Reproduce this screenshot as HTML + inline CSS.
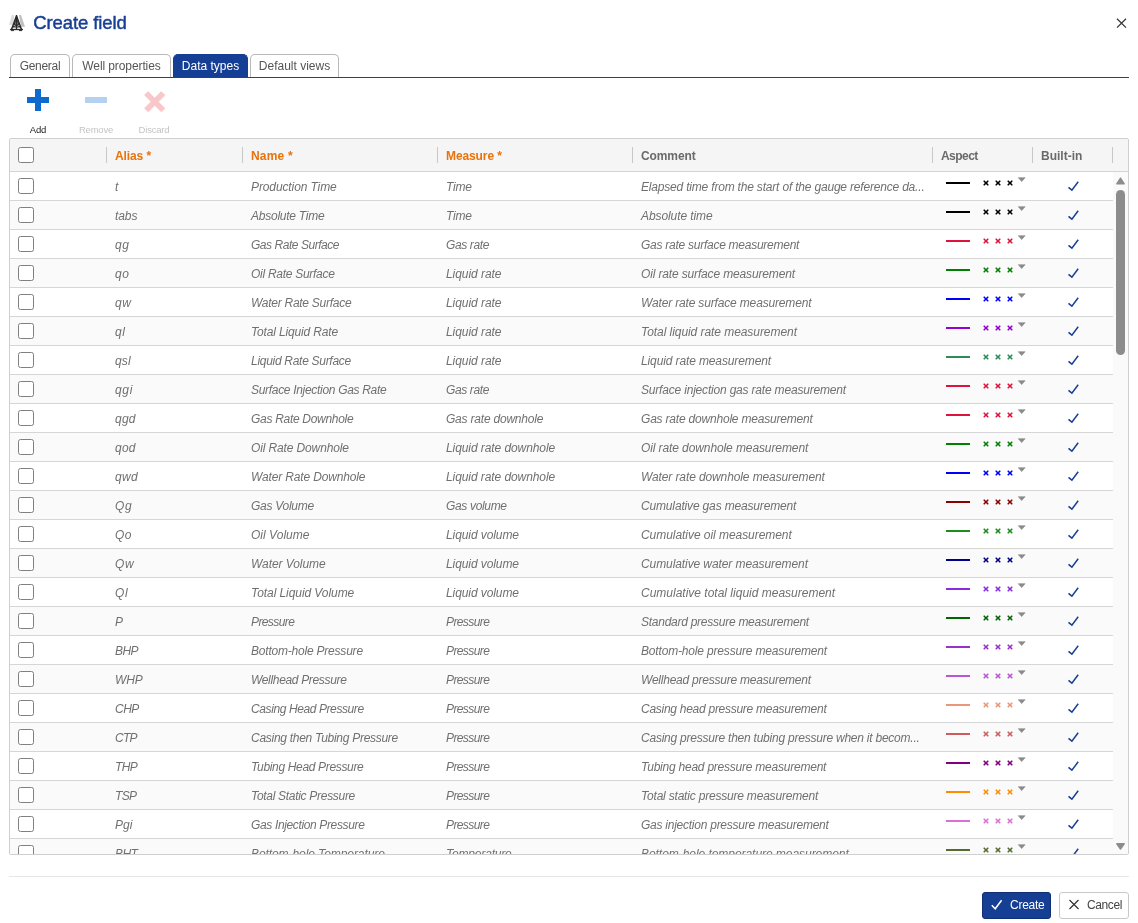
<!DOCTYPE html>
<html lang="en">
<head>
<meta charset="utf-8">
<title>Create field</title>
<style>
*{box-sizing:border-box;margin:0;padding:0}
html,body{width:1138px;height:923px;overflow:hidden;background:#fff}
body{font-family:"Liberation Sans",sans-serif;color:#555;position:relative}
#wrap{position:absolute;left:0;top:0;width:1138px;height:923px;will-change:transform}
.abs{position:absolute}
#ticon{position:absolute;left:4px;top:8px}
#title{position:absolute;left:33.200px;top:10.600px;font-size:18.5px;line-height:24px;color:#173f94;white-space:nowrap;letter-spacing:-0.1px;-webkit-text-stroke:0.45px #173f94}
#close{position:absolute;left:1115px;top:17px}
#tabs{position:absolute;left:9px;top:54px;width:1120px;height:24px;border-bottom:1px solid #1b4298}
.tab{position:absolute;top:0;height:23px;border:1px solid #b9b9b9;border-bottom:none;border-radius:5px 5px 0 0;font-size:12px;line-height:22px;text-align:center;color:#555;background:#fff;white-space:nowrap}
.tab.on{background:#153f94;border-color:#153f94;color:#fff}
.tb{position:absolute;top:124.500px;font-size:9.500px;line-height:10px;letter-spacing:-.2px;width:60px;text-align:center;color:#222}
.tb.dis{color:#c4c4c4}
#grid{position:absolute;left:9px;top:138px;width:1120px;height:717px;border:1px solid #cfcfcf;border-radius:2px;overflow:hidden;background:#fff}
#hdr{position:absolute;left:0;top:0;width:1118px;height:33px;background:#f5f5f5;border-bottom:1px solid #d4d4d4}
.h{position:absolute;top:1px;font-size:12px;line-height:32px;letter-spacing:-0.1px;font-weight:bold;color:#6a6a6a;white-space:nowrap}
.h.req{color:#e8720c}
.sep{position:absolute;top:8px;width:1px;height:16px;background:#c8c8c8}
#body{position:absolute;left:0;top:33px;width:1103px;height:690px}
.r{position:relative;height:29px;border-bottom:1px solid #d6d6d6;background:#fff;width:1103px}
.r.alt{background:#fafafa}
.cb{position:absolute;left:8px;top:6px;width:16px;height:16px;border:1px solid #808080;border-radius:2.5px;background:#fff}
.c{position:absolute;top:0;font-size:12px;line-height:30px;font-style:italic;color:#707070;white-space:nowrap}
.c1{left:105px}.c2{left:241px}.c3{left:436px}.c4{left:631px}
.asp{position:absolute;left:930px;top:0;fill:none}
.asp .ln{stroke-width:2}
.asp .xx{stroke-width:1.6;stroke-linecap:round}
.asp .dd{fill:#8a8a8a;stroke:#8a8a8a;stroke-width:.6;stroke-linejoin:round}
.chk{position:absolute;left:1057px;top:8px;fill:none;stroke:#173f94;stroke-width:1.5}
#sb{position:absolute;left:1103px;top:33px;width:15px;height:683px;background:#fafafa}
#foot{position:absolute;left:9px;top:876px;width:1120px;height:1px;background:#e6e6e6}
.btn{position:absolute;top:892px;height:27px;border-radius:3px;font-size:12px;line-height:24px;white-space:nowrap}
#bcreate{left:982px;width:69px;background:#153f94;border:1px solid #0f2f73;color:#fff}
#bcancel{left:1059px;width:70px;background:#fff;border:1px solid #c9c9c9;color:#444}
</style>
</head>
<body>
<div id="wrap">
<svg id="ticon" width="30" height="30" viewBox="0 0 30 30"><path d="M7.800 7H9.800L11.200 16.800H5z" fill="#dedede"/><path d="M15 7H17L21 18.800H17z" fill="#c0c0c0"/><g fill="none" stroke="#2b2b2b"><path d="M12.500 8L7.600 21.300M12.500 8L17.400 21.300" stroke-width="1.500"/><path d="M12.500 7V21.300" stroke-width="1.300"/><path d="M12.500 6.800L10.800 12.600H14.200z" fill="#2b2b2b" stroke="none"/><path d="M10.200 13.300H14.800M9.200 16.200H15.800M8.200 19H16.800M10.200 13.300L15.800 16.200M14.800 13.300L9.200 16.200M9.200 16.200L16.800 19M15.800 16.200L8.200 19" stroke-width="1"/><path d="M6 21.500H19" stroke-width="1.300"/><path d="M7 22.600H10M15 22.600H18" stroke-width="1"/></g></svg>
<div id="title">Create field</div>
<svg id="close" width="12" height="12" viewBox="0 0 12 12"><path d="M2 1.800L11 10.600M11 1.800L2 10.600" stroke="#333" stroke-width="1.200" fill="none"/></svg>
<div id="tabs">
<div class="tab" style="left:1px;width:60px;letter-spacing:-0.3px">General</div>
<div class="tab" style="left:63px;width:99px;letter-spacing:-0.1px">Well properties</div>
<div class="tab on" style="left:164px;width:75px">Data types</div>
<div class="tab" style="left:241px;width:89px">Default views</div>
</div>
<svg class="abs" style="left:27px;top:89px" width="22" height="22" viewBox="0 0 22 22"><path d="M8 0h6v8h8v6h-8v8h-6v-8h-8v-6h8z" fill="#0f6acf"/></svg>
<svg class="abs" style="left:85px;top:89px" width="22" height="22" viewBox="0 0 22 22"><path d="M0 8h22v6h-22z" fill="#b4d2ef"/></svg>
<svg class="abs" style="left:143px;top:89px" width="26" height="26" viewBox="0 0 26 26"><path d="M3.800 4.800l17 17m0-17l-17 17" stroke="#fdeced" stroke-width="5.500" fill="none"/><path d="M3.100 4.100l17 17m0-17l-17 17" stroke="#f8c7c9" stroke-width="5.500" fill="none"/></svg>
<div class="tb" style="left:8px">Add</div>
<div class="tb dis" style="left:66px">Remove</div>
<div class="tb dis" style="left:124px">Discard</div>
<div id="grid">
<div id="hdr">
<span class="cb" style="top:8px"></span>
<i class="sep" style="left:96px"></i><span class="h req" style="left:105px">Alias *</span>
<i class="sep" style="left:232px"></i><span class="h req" style="left:241px;letter-spacing:.2px">Name *</span>
<i class="sep" style="left:427px"></i><span class="h req" style="left:436px">Measure *</span>
<i class="sep" style="left:622px"></i><span class="h" style="left:631px">Comment</span>
<i class="sep" style="left:922px"></i><span class="h" style="left:931px;letter-spacing:-.55px">Aspect</span>
<i class="sep" style="left:1022px"></i><span class="h" style="left:1031px;letter-spacing:0">Built-in</span>
<i class="sep" style="left:1102px"></i>
</div>
<div id="body">
<div class="r"><span class="cb"></span><span class="c c1">t</span><span class="c c2" style="letter-spacing:-0.11px">Production Time</span><span class="c c3" style="letter-spacing:-0.25px">Time</span><span class="c c4" style="letter-spacing:-0.19px">Elapsed time from the start of the gauge reference da...</span><svg class="asp" width="90" height="29" viewBox="0 0 90 29" stroke="#000000"><path class="ln" d="M6 11H30"/><path class="xx" d="M44.200 9.200l3.600 3.600m0-3.600l-3.600 3.600M56.200 9.200l3.600 3.600m0-3.600l-3.600 3.600M68.200 9.200l3.600 3.600m0-3.600l-3.600 3.600"/><path class="dd" d="M78.300 5.700h6.800l-3.400 3.900z"/></svg><svg class="chk" width="14" height="12" viewBox="0 0 14 12"><path d="M1.500 7.400L4.900 10.200L11.200 1.800"/></svg></div>
<div class="r alt"><span class="cb"></span><span class="c c1" style="letter-spacing:-0.1px">tabs</span><span class="c c2" style="letter-spacing:-0.24px">Absolute Time</span><span class="c c3" style="letter-spacing:-0.25px">Time</span><span class="c c4" style="letter-spacing:-0.09px">Absolute time</span><svg class="asp" width="90" height="29" viewBox="0 0 90 29" stroke="#000000"><path class="ln" d="M6 11H30"/><path class="xx" d="M44.200 9.200l3.600 3.600m0-3.600l-3.600 3.600M56.200 9.200l3.600 3.600m0-3.600l-3.600 3.600M68.200 9.200l3.600 3.600m0-3.600l-3.600 3.600"/><path class="dd" d="M78.300 5.700h6.800l-3.400 3.900z"/></svg><svg class="chk" width="14" height="12" viewBox="0 0 14 12"><path d="M1.500 7.400L4.900 10.200L11.200 1.800"/></svg></div>
<div class="r"><span class="cb"></span><span class="c c1" style="letter-spacing:0.7px">qg</span><span class="c c2" style="letter-spacing:-0.46px">Gas Rate Surface</span><span class="c c3" style="letter-spacing:-0.38px">Gas rate</span><span class="c c4" style="letter-spacing:-0.26px">Gas rate surface measurement</span><svg class="asp" width="90" height="29" viewBox="0 0 90 29" stroke="#dc143c"><path class="ln" d="M6 11H30"/><path class="xx" d="M44.200 9.200l3.600 3.600m0-3.600l-3.600 3.600M56.200 9.200l3.600 3.600m0-3.600l-3.600 3.600M68.200 9.200l3.600 3.600m0-3.600l-3.600 3.600"/><path class="dd" d="M78.300 5.700h6.800l-3.400 3.900z"/></svg><svg class="chk" width="14" height="12" viewBox="0 0 14 12"><path d="M1.500 7.400L4.900 10.200L11.200 1.800"/></svg></div>
<div class="r alt"><span class="cb"></span><span class="c c1" style="letter-spacing:0.7px">qo</span><span class="c c2" style="letter-spacing:-0.28px">Oil Rate Surface</span><span class="c c3" style="letter-spacing:-0.06px">Liquid rate</span><span class="c c4" style="letter-spacing:-0.15px">Oil rate surface measurement</span><svg class="asp" width="90" height="29" viewBox="0 0 90 29" stroke="#008000"><path class="ln" d="M6 11H30"/><path class="xx" d="M44.200 9.200l3.600 3.600m0-3.600l-3.600 3.600M56.200 9.200l3.600 3.600m0-3.600l-3.600 3.600M68.200 9.200l3.600 3.600m0-3.600l-3.600 3.600"/><path class="dd" d="M78.300 5.700h6.800l-3.400 3.900z"/></svg><svg class="chk" width="14" height="12" viewBox="0 0 14 12"><path d="M1.500 7.400L4.900 10.200L11.200 1.800"/></svg></div>
<div class="r"><span class="cb"></span><span class="c c1" style="letter-spacing:0.7px">qw</span><span class="c c2" style="letter-spacing:-0.27px">Water Rate Surface</span><span class="c c3" style="letter-spacing:-0.06px">Liquid rate</span><span class="c c4" style="letter-spacing:-0.16px">Water rate surface measurement</span><svg class="asp" width="90" height="29" viewBox="0 0 90 29" stroke="#0000ff"><path class="ln" d="M6 11H30"/><path class="xx" d="M44.200 9.200l3.600 3.600m0-3.600l-3.600 3.600M56.200 9.200l3.600 3.600m0-3.600l-3.600 3.600M68.200 9.200l3.600 3.600m0-3.600l-3.600 3.600"/><path class="dd" d="M78.300 5.700h6.800l-3.400 3.900z"/></svg><svg class="chk" width="14" height="12" viewBox="0 0 14 12"><path d="M1.500 7.400L4.900 10.200L11.200 1.800"/></svg></div>
<div class="r alt"><span class="cb"></span><span class="c c1" style="letter-spacing:0.7px">ql</span><span class="c c2" style="letter-spacing:-0.16px">Total Liquid Rate</span><span class="c c3" style="letter-spacing:-0.06px">Liquid rate</span><span class="c c4" style="letter-spacing:-0.06px">Total liquid rate measurement</span><svg class="asp" width="90" height="29" viewBox="0 0 90 29" stroke="#9400d3"><path class="ln" d="M6 11H30"/><path class="xx" d="M44.200 9.200l3.600 3.600m0-3.600l-3.600 3.600M56.200 9.200l3.600 3.600m0-3.600l-3.600 3.600M68.200 9.200l3.600 3.600m0-3.600l-3.600 3.600"/><path class="dd" d="M78.300 5.700h6.800l-3.400 3.900z"/></svg><svg class="chk" width="14" height="12" viewBox="0 0 14 12"><path d="M1.500 7.400L4.900 10.200L11.200 1.800"/></svg></div>
<div class="r"><span class="cb"></span><span class="c c1" style="letter-spacing:0.13px">qsl</span><span class="c c2" style="letter-spacing:-0.29px">Liquid Rate Surface</span><span class="c c3" style="letter-spacing:-0.06px">Liquid rate</span><span class="c c4" style="letter-spacing:-0.12px">Liquid rate measurement</span><svg class="asp" width="90" height="29" viewBox="0 0 90 29" stroke="#2e8b57"><path class="ln" d="M6 11H30"/><path class="xx" d="M44.200 9.200l3.600 3.600m0-3.600l-3.600 3.600M56.200 9.200l3.600 3.600m0-3.600l-3.600 3.600M68.200 9.200l3.600 3.600m0-3.600l-3.600 3.600"/><path class="dd" d="M78.300 5.700h6.800l-3.400 3.900z"/></svg><svg class="chk" width="14" height="12" viewBox="0 0 14 12"><path d="M1.500 7.400L4.900 10.200L11.200 1.800"/></svg></div>
<div class="r alt"><span class="cb"></span><span class="c c1" style="letter-spacing:0.7px">qgi</span><span class="c c2" style="letter-spacing:-0.31px">Surface Injection Gas Rate</span><span class="c c3" style="letter-spacing:-0.38px">Gas rate</span><span class="c c4" style="letter-spacing:-0.19px">Surface injection gas rate measurement</span><svg class="asp" width="90" height="29" viewBox="0 0 90 29" stroke="#dc143c"><path class="ln" d="M6 11H30"/><path class="xx" d="M44.200 9.200l3.600 3.600m0-3.600l-3.600 3.600M56.200 9.200l3.600 3.600m0-3.600l-3.600 3.600M68.200 9.200l3.600 3.600m0-3.600l-3.600 3.600"/><path class="dd" d="M78.300 5.700h6.800l-3.400 3.900z"/></svg><svg class="chk" width="14" height="12" viewBox="0 0 14 12"><path d="M1.500 7.400L4.900 10.200L11.200 1.800"/></svg></div>
<div class="r"><span class="cb"></span><span class="c c1" style="letter-spacing:0.23px">qgd</span><span class="c c2" style="letter-spacing:-0.3px">Gas Rate Downhole</span><span class="c c3" style="letter-spacing:-0.21px">Gas rate downhole</span><span class="c c4" style="letter-spacing:-0.2px">Gas rate downhole measurement</span><svg class="asp" width="90" height="29" viewBox="0 0 90 29" stroke="#dc143c"><path class="ln" d="M6 11H30"/><path class="xx" d="M44.200 9.200l3.600 3.600m0-3.600l-3.600 3.600M56.200 9.200l3.600 3.600m0-3.600l-3.600 3.600M68.200 9.200l3.600 3.600m0-3.600l-3.600 3.600"/><path class="dd" d="M78.300 5.700h6.800l-3.400 3.900z"/></svg><svg class="chk" width="14" height="12" viewBox="0 0 14 12"><path d="M1.500 7.400L4.900 10.200L11.200 1.800"/></svg></div>
<div class="r alt"><span class="cb"></span><span class="c c1" style="letter-spacing:0.23px">qod</span><span class="c c2" style="letter-spacing:-0.13px">Oil Rate Downhole</span><span class="c c3" style="letter-spacing:-0.08px">Liquid rate downhole</span><span class="c c4" style="letter-spacing:-0.1px">Oil rate downhole measurement</span><svg class="asp" width="90" height="29" viewBox="0 0 90 29" stroke="#008000"><path class="ln" d="M6 11H30"/><path class="xx" d="M44.200 9.200l3.600 3.600m0-3.600l-3.600 3.600M56.200 9.200l3.600 3.600m0-3.600l-3.600 3.600M68.200 9.200l3.600 3.600m0-3.600l-3.600 3.600"/><path class="dd" d="M78.300 5.700h6.800l-3.400 3.900z"/></svg><svg class="chk" width="14" height="12" viewBox="0 0 14 12"><path d="M1.500 7.400L4.900 10.200L11.200 1.800"/></svg></div>
<div class="r"><span class="cb"></span><span class="c c1" style="letter-spacing:0.39px">qwd</span><span class="c c2" style="letter-spacing:-0.15px">Water Rate Downhole</span><span class="c c3" style="letter-spacing:-0.08px">Liquid rate downhole</span><span class="c c4" style="letter-spacing:-0.11px">Water rate downhole measurement</span><svg class="asp" width="90" height="29" viewBox="0 0 90 29" stroke="#0000ff"><path class="ln" d="M6 11H30"/><path class="xx" d="M44.200 9.200l3.600 3.600m0-3.600l-3.600 3.600M56.200 9.200l3.600 3.600m0-3.600l-3.600 3.600M68.200 9.200l3.600 3.600m0-3.600l-3.600 3.600"/><path class="dd" d="M78.300 5.700h6.800l-3.400 3.900z"/></svg><svg class="chk" width="14" height="12" viewBox="0 0 14 12"><path d="M1.500 7.400L4.900 10.200L11.200 1.800"/></svg></div>
<div class="r alt"><span class="cb"></span><span class="c c1" style="letter-spacing:0.68px">Qg</span><span class="c c2" style="letter-spacing:-0.28px">Gas Volume</span><span class="c c3" style="letter-spacing:-0.34px">Gas volume</span><span class="c c4" style="letter-spacing:-0.16px">Cumulative gas measurement</span><svg class="asp" width="90" height="29" viewBox="0 0 90 29" stroke="#8b0000"><path class="ln" d="M6 11H30"/><path class="xx" d="M44.200 9.200l3.600 3.600m0-3.600l-3.600 3.600M56.200 9.200l3.600 3.600m0-3.600l-3.600 3.600M68.200 9.200l3.600 3.600m0-3.600l-3.600 3.600"/><path class="dd" d="M78.300 5.700h6.800l-3.400 3.900z"/></svg><svg class="chk" width="14" height="12" viewBox="0 0 14 12"><path d="M1.500 7.400L4.900 10.200L11.200 1.800"/></svg></div>
<div class="r"><span class="cb"></span><span class="c c1" style="letter-spacing:0.38px">Qo</span><span class="c c2" style="letter-spacing:0.03px">Oil Volume</span><span class="c c3" style="letter-spacing:-0.09px">Liquid volume</span><span class="c c4" style="letter-spacing:-0.05px">Cumulative oil measurement</span><svg class="asp" width="90" height="29" viewBox="0 0 90 29" stroke="#1c8c1c"><path class="ln" d="M6 11H30"/><path class="xx" d="M44.200 9.200l3.600 3.600m0-3.600l-3.600 3.600M56.200 9.200l3.600 3.600m0-3.600l-3.600 3.600M68.200 9.200l3.600 3.600m0-3.600l-3.600 3.600"/><path class="dd" d="M78.300 5.700h6.800l-3.400 3.900z"/></svg><svg class="chk" width="14" height="12" viewBox="0 0 14 12"><path d="M1.500 7.400L4.900 10.200L11.200 1.800"/></svg></div>
<div class="r alt"><span class="cb"></span><span class="c c1" style="letter-spacing:0.7px">Qw</span><span class="c c2" style="letter-spacing:-0.06px">Water Volume</span><span class="c c3" style="letter-spacing:-0.09px">Liquid volume</span><span class="c c4" style="letter-spacing:-0.09px">Cumulative water measurement</span><svg class="asp" width="90" height="29" viewBox="0 0 90 29" stroke="#00008b"><path class="ln" d="M6 11H30"/><path class="xx" d="M44.200 9.200l3.600 3.600m0-3.600l-3.600 3.600M56.200 9.200l3.600 3.600m0-3.600l-3.600 3.600M68.200 9.200l3.600 3.600m0-3.600l-3.600 3.600"/><path class="dd" d="M78.300 5.700h6.800l-3.400 3.900z"/></svg><svg class="chk" width="14" height="12" viewBox="0 0 14 12"><path d="M1.500 7.400L4.900 10.200L11.200 1.800"/></svg></div>
<div class="r"><span class="cb"></span><span class="c c1" style="letter-spacing:0.7px">Ql</span><span class="c c2" style="letter-spacing:-0.07px">Total Liquid Volume</span><span class="c c3" style="letter-spacing:-0.09px">Liquid volume</span><span class="c c4">Cumulative total liquid measurement</span><svg class="asp" width="90" height="29" viewBox="0 0 90 29" stroke="#8a2be2"><path class="ln" d="M6 11H30"/><path class="xx" d="M44.200 9.200l3.600 3.600m0-3.600l-3.600 3.600M56.200 9.200l3.600 3.600m0-3.600l-3.600 3.600M68.200 9.200l3.600 3.600m0-3.600l-3.600 3.600"/><path class="dd" d="M78.300 5.700h6.800l-3.400 3.900z"/></svg><svg class="chk" width="14" height="12" viewBox="0 0 14 12"><path d="M1.500 7.400L4.900 10.200L11.200 1.800"/></svg></div>
<div class="r alt"><span class="cb"></span><span class="c c1">P</span><span class="c c2" style="letter-spacing:-0.6px">Pressure</span><span class="c c3" style="letter-spacing:-0.6px">Pressure</span><span class="c c4" style="letter-spacing:-0.26px">Standard pressure measurement</span><svg class="asp" width="90" height="29" viewBox="0 0 90 29" stroke="#006400"><path class="ln" d="M6 11H30"/><path class="xx" d="M44.200 9.200l3.600 3.600m0-3.600l-3.600 3.600M56.200 9.200l3.600 3.600m0-3.600l-3.600 3.600M68.200 9.200l3.600 3.600m0-3.600l-3.600 3.600"/><path class="dd" d="M78.300 5.700h6.800l-3.400 3.900z"/></svg><svg class="chk" width="14" height="12" viewBox="0 0 14 12"><path d="M1.500 7.400L4.900 10.200L11.200 1.800"/></svg></div>
<div class="r"><span class="cb"></span><span class="c c1" style="letter-spacing:-0.54px">BHP</span><span class="c c2" style="letter-spacing:-0.21px">Bottom-hole Pressure</span><span class="c c3" style="letter-spacing:-0.6px">Pressure</span><span class="c c4" style="letter-spacing:-0.17px">Bottom-hole pressure measurement</span><svg class="asp" width="90" height="29" viewBox="0 0 90 29" stroke="#9932cc"><path class="ln" d="M6 11H30"/><path class="xx" d="M44.200 9.200l3.600 3.600m0-3.600l-3.600 3.600M56.200 9.200l3.600 3.600m0-3.600l-3.600 3.600M68.200 9.200l3.600 3.600m0-3.600l-3.600 3.600"/><path class="dd" d="M78.300 5.700h6.800l-3.400 3.900z"/></svg><svg class="chk" width="14" height="12" viewBox="0 0 14 12"><path d="M1.500 7.400L4.900 10.200L11.200 1.800"/></svg></div>
<div class="r alt"><span class="cb"></span><span class="c c1" style="letter-spacing:-0.15px">WHP</span><span class="c c2" style="letter-spacing:-0.33px">Wellhead Pressure</span><span class="c c3" style="letter-spacing:-0.6px">Pressure</span><span class="c c4" style="letter-spacing:-0.23px">Wellhead pressure measurement</span><svg class="asp" width="90" height="29" viewBox="0 0 90 29" stroke="#ba55d3"><path class="ln" d="M6 11H30"/><path class="xx" d="M44.200 9.200l3.600 3.600m0-3.600l-3.600 3.600M56.200 9.200l3.600 3.600m0-3.600l-3.600 3.600M68.200 9.200l3.600 3.600m0-3.600l-3.600 3.600"/><path class="dd" d="M78.300 5.700h6.800l-3.400 3.900z"/></svg><svg class="chk" width="14" height="12" viewBox="0 0 14 12"><path d="M1.500 7.400L4.900 10.200L11.200 1.800"/></svg></div>
<div class="r"><span class="cb"></span><span class="c c1" style="letter-spacing:-0.52px">CHP</span><span class="c c2" style="letter-spacing:-0.4px">Casing Head Pressure</span><span class="c c3" style="letter-spacing:-0.6px">Pressure</span><span class="c c4" style="letter-spacing:-0.27px">Casing head pressure measurement</span><svg class="asp" width="90" height="29" viewBox="0 0 90 29" stroke="#e9967a"><path class="ln" d="M6 11H30"/><path class="xx" d="M44.200 9.200l3.600 3.600m0-3.600l-3.600 3.600M56.200 9.200l3.600 3.600m0-3.600l-3.600 3.600M68.200 9.200l3.600 3.600m0-3.600l-3.600 3.600"/><path class="dd" d="M78.300 5.700h6.800l-3.400 3.900z"/></svg><svg class="chk" width="14" height="12" viewBox="0 0 14 12"><path d="M1.500 7.400L4.900 10.200L11.200 1.800"/></svg></div>
<div class="r alt"><span class="cb"></span><span class="c c1" style="letter-spacing:-0.7px">CTP</span><span class="c c2" style="letter-spacing:-0.28px">Casing then Tubing Pressure</span><span class="c c3" style="letter-spacing:-0.6px">Pressure</span><span class="c c4" style="letter-spacing:-0.23px">Casing pressure then tubing pressure when it becom...</span><svg class="asp" width="90" height="29" viewBox="0 0 90 29" stroke="#cd5c5c"><path class="ln" d="M6 11H30"/><path class="xx" d="M44.200 9.200l3.600 3.600m0-3.600l-3.600 3.600M56.200 9.200l3.600 3.600m0-3.600l-3.600 3.600M68.200 9.200l3.600 3.600m0-3.600l-3.600 3.600"/><path class="dd" d="M78.300 5.700h6.800l-3.400 3.900z"/></svg><svg class="chk" width="14" height="12" viewBox="0 0 14 12"><path d="M1.500 7.400L4.900 10.200L11.200 1.800"/></svg></div>
<div class="r"><span class="cb"></span><span class="c c1" style="letter-spacing:-0.6px">THP</span><span class="c c2" style="letter-spacing:-0.34px">Tubing Head Pressure</span><span class="c c3" style="letter-spacing:-0.6px">Pressure</span><span class="c c4" style="letter-spacing:-0.23px">Tubing head pressure measurement</span><svg class="asp" width="90" height="29" viewBox="0 0 90 29" stroke="#800080"><path class="ln" d="M6 11H30"/><path class="xx" d="M44.200 9.200l3.600 3.600m0-3.600l-3.600 3.600M56.200 9.200l3.600 3.600m0-3.600l-3.600 3.600M68.200 9.200l3.600 3.600m0-3.600l-3.600 3.600"/><path class="dd" d="M78.300 5.700h6.800l-3.400 3.900z"/></svg><svg class="chk" width="14" height="12" viewBox="0 0 14 12"><path d="M1.500 7.400L4.900 10.200L11.200 1.800"/></svg></div>
<div class="r alt"><span class="cb"></span><span class="c c1" style="letter-spacing:-0.7px">TSP</span><span class="c c2" style="letter-spacing:-0.3px">Total Static Pressure</span><span class="c c3" style="letter-spacing:-0.6px">Pressure</span><span class="c c4" style="letter-spacing:-0.2px">Total static pressure measurement</span><svg class="asp" width="90" height="29" viewBox="0 0 90 29" stroke="#ff8c00"><path class="ln" d="M6 11H30"/><path class="xx" d="M44.200 9.200l3.600 3.600m0-3.600l-3.600 3.600M56.200 9.200l3.600 3.600m0-3.600l-3.600 3.600M68.200 9.200l3.600 3.600m0-3.600l-3.600 3.600"/><path class="dd" d="M78.300 5.700h6.800l-3.400 3.900z"/></svg><svg class="chk" width="14" height="12" viewBox="0 0 14 12"><path d="M1.500 7.400L4.900 10.200L11.200 1.800"/></svg></div>
<div class="r"><span class="cb"></span><span class="c c1" style="letter-spacing:0.08px">Pgi</span><span class="c c2" style="letter-spacing:-0.36px">Gas Injection Pressure</span><span class="c c3" style="letter-spacing:-0.6px">Pressure</span><span class="c c4" style="letter-spacing:-0.25px">Gas injection pressure measurement</span><svg class="asp" width="90" height="29" viewBox="0 0 90 29" stroke="#da70d6"><path class="ln" d="M6 11H30"/><path class="xx" d="M44.200 9.200l3.600 3.600m0-3.600l-3.600 3.600M56.200 9.200l3.600 3.600m0-3.600l-3.600 3.600M68.200 9.200l3.600 3.600m0-3.600l-3.600 3.600"/><path class="dd" d="M78.300 5.700h6.800l-3.400 3.900z"/></svg><svg class="chk" width="14" height="12" viewBox="0 0 14 12"><path d="M1.500 7.400L4.900 10.200L11.200 1.800"/></svg></div>
<div class="r alt"><span class="cb"></span><span class="c c1" style="letter-spacing:-0.6px">BHT</span><span class="c c2" style="letter-spacing:-0.08px">Bottom-hole Temperature</span><span class="c c3" style="letter-spacing:-0.18px">Temperature</span><span class="c c4" style="letter-spacing:-0.05px">Bottom-hole temperature measurement</span><svg class="asp" width="90" height="29" viewBox="0 0 90 29" stroke="#556b2f"><path class="ln" d="M6 11H30"/><path class="xx" d="M44.200 9.200l3.600 3.600m0-3.600l-3.600 3.600M56.200 9.200l3.600 3.600m0-3.600l-3.600 3.600M68.200 9.200l3.600 3.600m0-3.600l-3.600 3.600"/><path class="dd" d="M78.300 5.700h6.800l-3.400 3.900z"/></svg><svg class="chk" width="14" height="12" viewBox="0 0 14 12"><path d="M1.500 7.400L4.900 10.200L11.200 1.800"/></svg></div></div>
<div id="sb">
<svg class="abs" style="left:0;top:0" width="15" height="683" viewBox="0 0 15 683"><path d="M3.800 11.800h7.400l-3.700-5.600z" fill="#8c8c8c" stroke="#8c8c8c" stroke-width="1.400" stroke-linejoin="round"/><rect x="3" y="18" width="9" height="165" rx="4.500" fill="#8c8c8c"/><path d="M3.800 671.800h7.400l-3.700 5.200z" fill="#8c8c8c" stroke="#8c8c8c" stroke-width="1.400" stroke-linejoin="round"/></svg>
</div>
</div>
<div id="foot"></div>
<div class="btn" id="bcreate"><svg class="abs" style="left:8px;top:6px" width="14" height="12" viewBox="0 0 14 12"><path d="M0.800 6.200L4.200 9.800L10.600 1.200" fill="none" stroke="#fff" stroke-width="1.500"/></svg><span class="abs" style="left:27px;top:0;letter-spacing:-.25px">Create</span></div>
<div class="btn" id="bcancel"><svg class="abs" style="left:8px;top:6px" width="12" height="12" viewBox="0 0 12 12"><path d="M1.500 1l9 9m0-9l-9 9" stroke="#333" stroke-width="1.200" fill="none"/></svg><span class="abs" style="left:27px;top:0;letter-spacing:-.4px">Cancel</span></div>
</div>
</body>
</html>
